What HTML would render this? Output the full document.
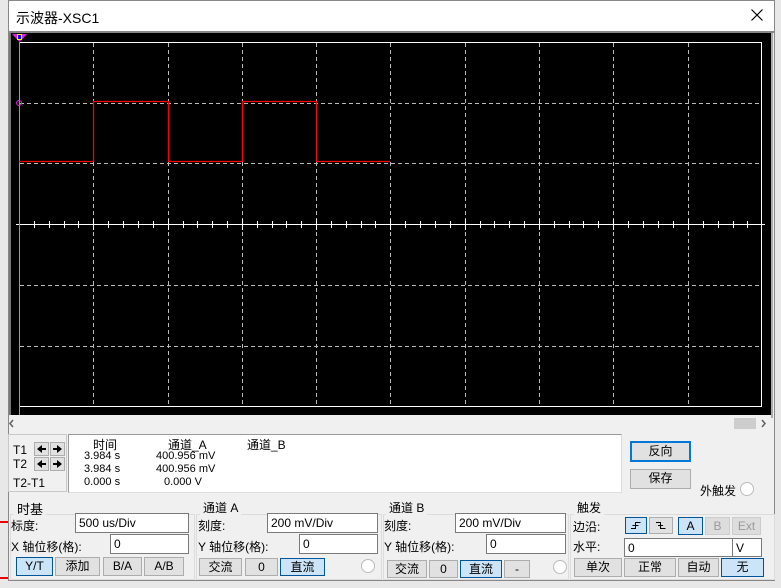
<!DOCTYPE html>
<html><head><meta charset="utf-8"><style>
*{margin:0;padding:0;box-sizing:border-box}
body{width:781px;height:588px;overflow:hidden;background:#f0f0f0;font-family:"Liberation Sans","Noto Sans CJK SC",sans-serif;font-size:12px;color:#000;position:relative}
.a{position:absolute;white-space:nowrap}
.b{position:absolute;background:#e1e1e1;border:1px solid #adadad;text-align:center;line-height:17px;font-size:12px}
.s{background:#cce4f7;border:1px solid #005499}
.i{position:absolute;background:#fff;border:1px solid #7a7a7a;padding-left:3px;line-height:18px}
.g{position:absolute;border:1px solid #dcdcdc}
.r{position:absolute;width:14px;height:14px;border:1px solid #bcbcbc;border-radius:50%;background:#fff}
</style></head><body>
<div class="a" style="left:0;top:0;width:8px;height:588px;background:#e8e8e8"></div>
<div class="a" style="left:0;top:580px;width:781px;height:8px;background:#e8e8e8"></div>
<div class="a" style="left:0;top:521px;width:8px;height:2px;background:#e00"></div>
<div class="a" style="left:0;top:577px;width:8px;height:2px;background:#e00"></div>
<div class="a" style="left:775px;top:0;width:6px;height:588px;background:#e8e8e8"></div>
<div class="a" style="left:8px;top:0;width:767px;height:581px;background:#f0f0f0;border:1px solid #888"></div>
<div class="a" style="left:9px;top:1px;width:765px;height:30px;background:#fff"></div>
<div class="a" style="left:16px;top:8px;font-size:14px">示波器-XSC1</div>
<svg class="a" style="left:751px;top:9px" width="12" height="12"><path d="M0.5 0.5L11.5 11.5M11.5 0.5L0.5 11.5" stroke="#000" stroke-width="1.2"/></svg>
<div class="a" style="left:9px;top:31px;width:765px;height:2px;background:#888"></div>
<svg class="a" style="left:0;top:0" width="781" height="588">
<rect x="10" y="33" width="761" height="382" fill="#000"/>
<rect x="9" y="33" width="2" height="382" fill="#777"/>
<rect x="771" y="33" width="2" height="385" fill="#aaa"/>
<g stroke="#bbb" stroke-dasharray="4,3" stroke-width="1">
<line x1="93.5" y1="43" x2="93.5" y2="406"/><line x1="168.5" y1="43" x2="168.5" y2="406"/>
<line x1="242.5" y1="43" x2="242.5" y2="406"/><line x1="316.5" y1="43" x2="316.5" y2="406"/>
<line x1="390.5" y1="43" x2="390.5" y2="406"/><line x1="465.5" y1="43" x2="465.5" y2="406"/>
<line x1="539.5" y1="43" x2="539.5" y2="406"/><line x1="613.5" y1="43" x2="613.5" y2="406"/>
<line x1="688.5" y1="43" x2="688.5" y2="406"/>
<line x1="20" y1="103.5" x2="762" y2="103.5"/><line x1="20" y1="163.5" x2="762" y2="163.5"/>
<line x1="20" y1="285.5" x2="762" y2="285.5"/><line x1="20" y1="346.5" x2="762" y2="346.5"/>
</g>
<line x1="16" y1="224.5" x2="765" y2="224.5" stroke="#fff"/>
<g stroke="#fff">
<path d="M34.5 221v7M49.5 221v7M64.5 221v7M78.5 221v7M93.5 219v11M108.5 221v7M123.5 221v7M138.5 221v7M153.5 221v7M168.5 219v11M183.5 221v7M197.5 221v7M212.5 221v7M227.5 221v7M242.5 219v11M257.5 221v7M272.5 221v7M286.5 221v7M301.5 221v7M316.5 219v11M331.5 221v7M346.5 221v7M361.5 221v7M375.5 221v7M390.5 219v11M405.5 221v7M420.5 221v7M435.5 221v7M450.5 221v7M465.5 219v11M480.5 221v7M494.5 221v7M509.5 221v7M524.5 221v7M539.5 219v11M554.5 221v7M569.5 221v7M583.5 221v7M598.5 221v7M613.5 219v11M628.5 221v7M643.5 221v7M658.5 221v7M673.5 221v7M688.5 219v11M703.5 221v7M718.5 221v7M733.5 221v7M747.5 221v7"/>
</g>
<rect x="19.5" y="42.5" width="742" height="364" fill="none" stroke="#fff"/>
<line x1="19.5" y1="42" x2="19.5" y2="415" stroke="#0f0"/>
<path d="M19 161.5H93.5V101.5H168.5V161.5H242.5V101.5H316.5V161.5H390" fill="none" stroke="#f00" stroke-width="1.3"/>
<polygon points="12,34 27,34 19.5,42" fill="#e020e0"/>
<rect x="17" y="34" width="5" height="6" fill="#ff0"/><rect x="18" y="35" width="3" height="4" fill="#00f"/>
<circle cx="19" cy="103" r="2.5" fill="none" stroke="#e020e0"/>
<rect x="734" y="418" width="22" height="11" fill="#cdcdcd"/>
<path d="M13 420l-3 3.5 3 3.5M762 420l3 3.5-3 3.5" fill="none" stroke="#606060" stroke-width="1.5"/>
</svg>
<div class="a" style="left:8px;top:434px;width:59px;height:58px;border:1px solid #c8c8c8"></div>
<div class="a" style="left:13px;top:443px">T1</div><div class="a" style="left:13px;top:457px">T2</div><div class="a" style="left:13px;top:476px">T2-T1</div>
<svg class="a" style="left:34px;top:442px" width="32" height="30">
<g fill="#e1e1e1" stroke="#adadad"><rect x="0.5" y="0.5" width="14" height="13"/><rect x="16.5" y="0.5" width="14" height="13"/><rect x="0.5" y="15.5" width="14" height="13"/><rect x="16.5" y="15.5" width="14" height="13"/></g>
<g fill="#000"><path d="M3 7l5-4v3h4v2H8v3z"/><path d="M28 7l-5-4v3h-4v2h4v3z"/><path d="M3 22l5-4v3h4v2H8v3z"/><path d="M28 22l-5-4v3h-4v2h4v3z"/></g>
</svg>
<div class="a" style="left:68px;top:434px;width:554px;height:59px;background:#fff;border:1px solid #999;border-right-color:#ddd;border-bottom-color:#ddd"></div>
<div class="a" style="left:93px;top:436px">时间</div><div class="a" style="left:168px;top:436px">通道_A</div><div class="a" style="left:247px;top:436px">通道_B</div>
<div class="a" style="left:84px;top:450px;font-size:11px">3.984 s</div><div class="a" style="left:156px;top:450px;font-size:11px">400.956 mV</div>
<div class="a" style="left:84px;top:463px;font-size:11px">3.984 s</div><div class="a" style="left:156px;top:463px;font-size:11px">400.956 mV</div>
<div class="a" style="left:84px;top:476px;font-size:11px">0.000 s</div><div class="a" style="left:164px;top:476px;font-size:11px">0.000 V</div>
<div class="b" style="left:630px;top:441px;width:61px;height:21px;border:2px solid #0078d7;line-height:17px">反向</div>
<div class="b" style="left:630px;top:469px;width:61px;height:20px">保存</div>
<div class="a" style="left:700px;top:482px">外触发</div><div class="r" style="left:740px;top:482px"></div>
<div class="g" style="left:10px;top:514px;width:185px;height:66px"></div>
<div class="a" style="left:14px;top:499px;background:#f0f0f0;padding:0 3px;font-size:13px">时基</div>
<div class="a" style="left:11px;top:517px">标度:</div><div class="i" style="left:75px;top:513px;width:114px;height:20px">500 us/Div</div>
<div class="a" style="left:11px;top:538px">X 轴位移(格):</div><div class="i" style="left:110px;top:534px;width:79px;height:20px">0</div>
<div class="b s" style="left:16px;top:557px;width:37px;height:19px">Y/T</div>
<div class="b" style="left:55px;top:557px;width:45px;height:19px">添加</div>
<div class="b" style="left:103px;top:557px;width:39px;height:19px">B/A</div>
<div class="b" style="left:144px;top:557px;width:40px;height:19px">A/B</div>
<div class="g" style="left:196px;top:514px;width:186px;height:66px"></div>
<div class="a" style="left:200px;top:499px;background:#f0f0f0;padding:0 3px">通道 A</div>
<div class="a" style="left:198px;top:517px">刻度:</div><div class="i" style="left:267px;top:513px;width:111px;height:20px">200 mV/Div</div>
<div class="a" style="left:198px;top:538px">Y 轴位移(格):</div><div class="i" style="left:299px;top:534px;width:79px;height:20px">0</div>
<div class="b" style="left:199px;top:558px;width:43px;height:18px">交流</div>
<div class="b" style="left:245px;top:558px;width:33px;height:18px">0</div>
<div class="b s" style="left:280px;top:558px;width:45px;height:18px">直流</div>
<div class="r" style="left:361px;top:559px"></div>
<div class="g" style="left:383px;top:514px;width:186px;height:66px"></div>
<div class="a" style="left:386px;top:499px;background:#f0f0f0;padding:0 3px">通道 B</div>
<div class="a" style="left:384px;top:517px">刻度:</div><div class="i" style="left:455px;top:513px;width:111px;height:20px">200 mV/Div</div>
<div class="a" style="left:384px;top:538px">Y 轴位移(格):</div><div class="i" style="left:486px;top:534px;width:80px;height:20px">0</div>
<div class="b" style="left:387px;top:560px;width:40px;height:18px">交流</div>
<div class="b" style="left:429px;top:560px;width:29px;height:18px">0</div>
<div class="b s" style="left:460px;top:560px;width:42px;height:18px">直流</div>
<div class="b" style="left:504px;top:560px;width:26px;height:18px">-</div>
<div class="r" style="left:553px;top:560px"></div>
<div class="g" style="left:570px;top:514px;width:205px;height:66px"></div>
<div class="a" style="left:574px;top:499px;background:#f0f0f0;padding:0 3px">触发</div>
<div class="a" style="left:573px;top:518px">边沿:</div>
<svg class="a" style="left:625px;top:517px" width="48" height="18">
<rect x="0.5" y="0.5" width="21" height="16" fill="#cce4f7" stroke="#005499"/>
<rect x="24.5" y="0.5" width="23" height="16" fill="#e1e1e1" stroke="#adadad"/>
<path d="M6 11.5h4.5V5.5h5M7.5 8.5h6" fill="none" stroke="#000"/>
<path d="M31 5.5h4.5v6h5M33 8.5h5" fill="none" stroke="#000"/>
</svg>
<div class="b s" style="left:678px;top:517px;width:25px;height:18px">A</div>
<div class="b" style="left:705px;top:517px;width:25px;height:18px;color:#9a9a9a;background:#ddd;border-color:#ccc">B</div>
<div class="b" style="left:732px;top:517px;width:29px;height:18px;color:#9a9a9a;background:#ddd;border-color:#ccc">Ext</div>
<div class="a" style="left:573px;top:538px">水平:</div>
<div class="i" style="left:624px;top:538px;width:109px;height:19px">0</div>
<div class="i" style="left:732px;top:538px;width:30px;height:19px">V</div>
<div class="b" style="left:574px;top:558px;width:48px;height:19px">单次</div>
<div class="b" style="left:624px;top:558px;width:52px;height:19px">正常</div>
<div class="b" style="left:678px;top:558px;width:41px;height:19px">自动</div>
<div class="b s" style="left:721px;top:558px;width:43px;height:19px">无</div>
</body></html>
